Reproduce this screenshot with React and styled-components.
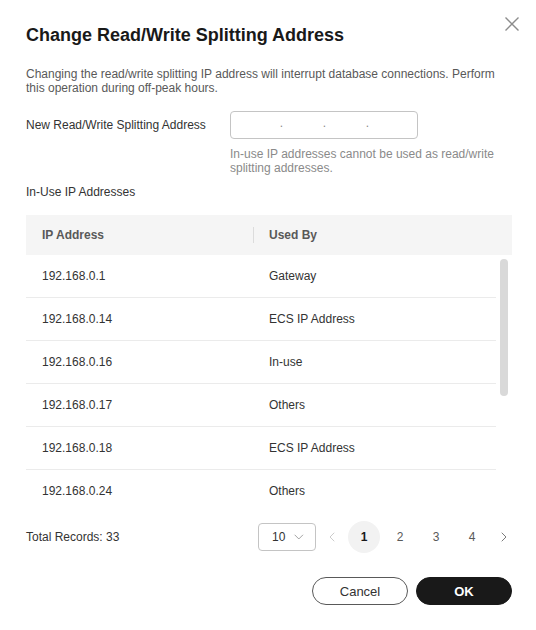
import React from "react";
import styled, { createGlobalStyle } from "styled-components";
import { ChevronDown, ChevronLeft, ChevronRight } from "lucide-react";

const GlobalStyle = createGlobalStyle`
  html, body { margin: 0; padding: 0; background: #fff; }
  body { font-family: "Liberation Sans", Arial, sans-serif; color: #191919; }
  * { box-sizing: border-box; }
`;

const Dialog = styled.div`
  position: relative;
  width: 536px;
  min-height: 630px;
  padding: 23px 24px 0 26px;
  background: #fff;
`;

const Title = styled.h2`
  margin: 0;
  font-size: 18px;
  line-height: 24px;
  font-weight: 700;
  color: #191919;
`;

const CloseButton = styled.button`
  position: absolute;
  top: 17px;
  right: 17px;
  width: 14px;
  height: 14px;
  padding: 0;
  border: 0;
  background: none;
  cursor: pointer;
  display: flex;
`;

const Description = styled.p`
  margin: 20px 0 0;
  font-size: 12px;
  line-height: 14px;
  color: #595959;
`;

const FormRow = styled.div`
  margin-top: 16px;
  display: flex;
  align-items: center;
`;

const Label = styled.div`
  width: 204px;
  font-size: 12px;
  line-height: 14px;
  color: #333;
`;

const IpInput = styled.div`
  width: 188px;
  height: 28px;
  border: 1px solid #c4c4c4;
  border-radius: 4px;
  display: flex;
  align-items: center;
  padding: 0 8px 0 10px;
`;

const Segment = styled.span`
  width: 38px;
`;

const Dot = styled.span`
  width: 5px;
  text-align: center;
  font-size: 12px;
  line-height: 12px;
  margin-top: -4px;
  color: #8a8a8a;
`;

const Hint = styled.p`
  margin: 8px 0 0 204px;
  font-size: 12px;
  line-height: 14px;
  color: #8a8a8a;
`;

const SectionLabel = styled.div`
  margin-top: 10px;
  font-size: 12px;
  line-height: 14px;
  color: #333;
`;

const Table = styled.div`
  margin-top: 16px;
`;

const HeaderRow = styled.div`
  display: flex;
  align-items: center;
  height: 40px;
  background: #f5f5f5;
`;

const HeadCell = styled.div`
  width: ${(p) => (p.$first ? "227px" : "auto")};
  flex: ${(p) => (p.$first ? "none" : "1")};
  padding-left: ${(p) => (p.$first ? "16px" : "15px")};
  font-size: 12px;
  font-weight: 700;
  color: #595959;
`;

const Divider = styled.span`
  width: 1px;
  height: 16px;
  background: #dcdcdc;
`;

const Body = styled.div`
  display: flex;
  height: 246px;
`;

const Viewport = styled.div`
  flex: 1;
  overflow: hidden;
`;

const ScrollTrack = styled.div`
  width: 16px;
  padding: 4px 4px 0;
`;

const ScrollThumb = styled.div`
  width: 8px;
  height: 137px;
  border-radius: 4px;
  background: #d9d9d9;
`;

const Row = styled.div`
  display: grid;
  grid-template-columns: 227px 1fr;
  align-items: center;
  height: 43px;
  border-bottom: 1px solid #ebebeb;
`;

const Cell = styled.div`
  padding-left: 16px;
  font-size: 12px;
  color: #333;
`;

const PagerRow = styled.div`
  margin-top: 20px;
  height: 32px;
  display: flex;
  align-items: center;
  justify-content: space-between;
`;

const Total = styled.div`
  font-size: 12px;
  color: #333;
`;

const Pager = styled.div`
  display: flex;
  align-items: center;
  gap: 4px;
`;

const SizeSelect = styled.div`
  width: 58px;
  height: 28px;
  border: 1px solid #c4c4c4;
  border-radius: 4px;
  display: flex;
  align-items: center;
  padding: 0 8px 0 13px;
  gap: 6px;
  font-size: 12px;
  color: #333;
`;

const ArrowButton = styled.button`
  width: 16px;
  height: 32px;
  margin-left: 4px;
  margin-right: ${(p) => (p.$prev ? "4px" : "0")};
  padding: 0;
  border: 0;
  background: none;
  display: flex;
  align-items: center;
  justify-content: center;
  color: ${(p) => (p.$disabled ? "#c4c4c4" : "#666")};
`;

const PageButton = styled.button`
  width: 32px;
  height: 32px;
  padding: 0;
  border: 0;
  border-radius: 50%;
  font-family: inherit;
  font-size: 12px;
  background: ${(p) => (p.$active ? "#f2f2f2" : "transparent")};
  font-weight: ${(p) => (p.$active ? 700 : 400)};
  color: ${(p) => (p.$active ? "#191919" : "#595959")};
`;

const Actions = styled.div`
  margin-top: 24px;
  display: flex;
  justify-content: flex-end;
  gap: 8px;
`;

const Button = styled.button`
  width: 96px;
  height: 28px;
  border-radius: 14px;
  font-family: inherit;
  font-size: 13px;
  cursor: pointer;
  border: 1px solid ${(p) => (p.$primary ? "#191919" : "#595959")};
  background: ${(p) => (p.$primary ? "#191919" : "#fff")};
  color: ${(p) => (p.$primary ? "#fff" : "#333")};
  font-weight: ${(p) => (p.$primary ? 700 : 400)};
`;

const rows = [
  ["192.168.0.1", "Gateway"],
  ["192.168.0.14", "ECS IP Address"],
  ["192.168.0.16", "In-use"],
  ["192.168.0.17", "Others"],
  ["192.168.0.18", "ECS IP Address"],
  ["192.168.0.24", "Others"],
];

export default function App() {
  return (
    <>
      <GlobalStyle />
      <Dialog>
        <Title>Change Read/Write Splitting Address</Title>
        <CloseButton aria-label="Close">
          <svg width="14" height="14" viewBox="0 0 14 14">
            <path d="M0.5 0.5 13.5 13.5 M13.5 0.5 0.5 13.5" stroke="#8c8c8c" strokeWidth="1.4" fill="none" />
          </svg>
        </CloseButton>
        <Description>
          Changing the read/write splitting IP address will interrupt database connections. Perform this
          operation during off-peak hours.
        </Description>
        <FormRow>
          <Label>New Read/Write Splitting Address</Label>
          <IpInput>
            <Segment />
            <Dot>.</Dot>
            <Segment />
            <Dot>.</Dot>
            <Segment />
            <Dot>.</Dot>
            <Segment />
          </IpInput>
        </FormRow>
        <Hint>In-use IP addresses cannot be used as read/write splitting addresses.</Hint>
        <SectionLabel>In-Use IP Addresses</SectionLabel>
        <Table>
          <HeaderRow>
            <HeadCell $first>IP Address</HeadCell>
            <Divider />
            <HeadCell>Used By</HeadCell>
          </HeaderRow>
          <Body>
            <Viewport>
              {rows.map(([ip, use]) => (
                <Row key={ip}>
                  <Cell>{ip}</Cell>
                  <Cell>{use}</Cell>
                </Row>
              ))}
            </Viewport>
            <ScrollTrack>
              <ScrollThumb />
            </ScrollTrack>
          </Body>
        </Table>
        <PagerRow>
          <Total>Total Records: 33</Total>
          <Pager>
            <SizeSelect>
              <span>10</span>
              <ChevronDown size={20} strokeWidth={1.2} color="#888" />
            </SizeSelect>
            <ArrowButton $disabled $prev>
              <ChevronLeft size={20} strokeWidth={1.3} />
            </ArrowButton>
            <PageButton $active>1</PageButton>
            <PageButton>2</PageButton>
            <PageButton>3</PageButton>
            <PageButton>4</PageButton>
            <ArrowButton>
              <ChevronRight size={20} strokeWidth={1.3} />
            </ArrowButton>
          </Pager>
        </PagerRow>
        <Actions>
          <Button>Cancel</Button>
          <Button $primary>OK</Button>
        </Actions>
      </Dialog>
    </>
  );
}
